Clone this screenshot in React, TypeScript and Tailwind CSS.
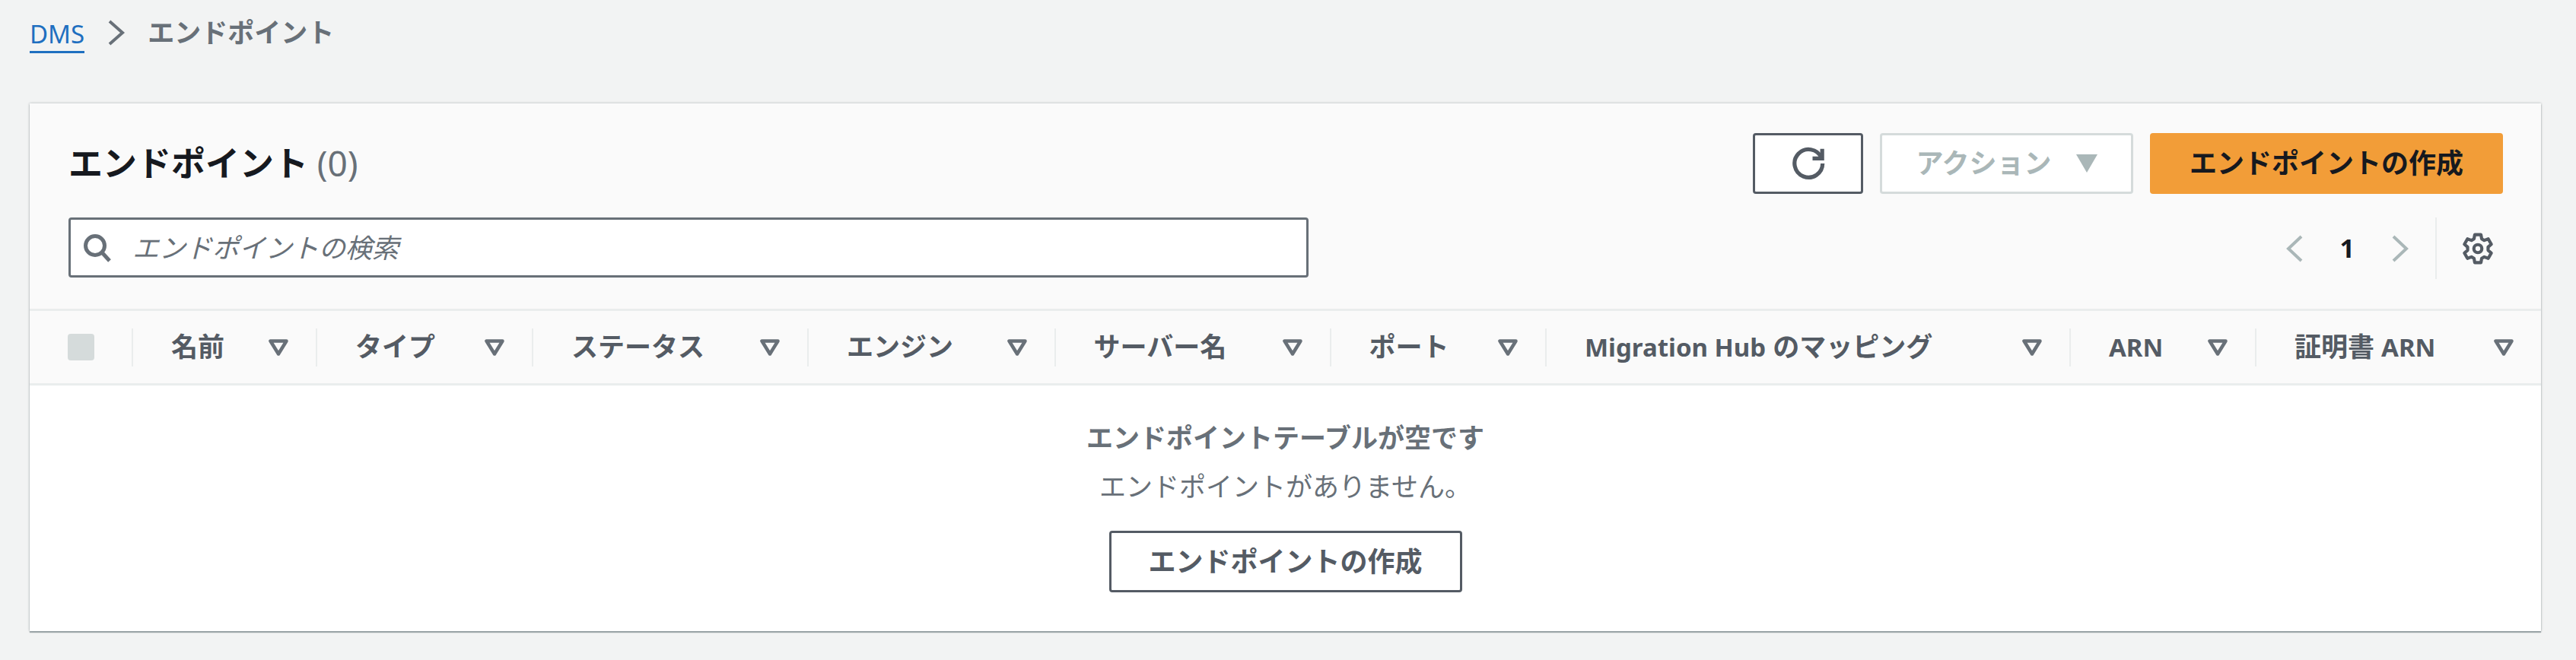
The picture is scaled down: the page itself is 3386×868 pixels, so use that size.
import React from "react";

function SortArrow() {
  return (
    <svg width="26" height="22" viewBox="0 0 26 22" className="shrink-0" fill="none">
      <path d="M2.5 2.5H23.5L13 19.5Z" stroke="#687078" strokeWidth="4.5" strokeLinejoin="round" />
    </svg>
  );
}

function Chevron({ dir, color, w, h, sw }: { dir: "l" | "r"; color: string; w: number; h: number; sw: number }) {
  const d = dir === "r" ? `M${sw} ${sw} L${w - sw} ${h / 2} L${sw} ${h - sw}` : `M${w - sw} ${sw} L${sw} ${h / 2} L${w - sw} ${h - sw}`;
  return (
    <svg width={w} height={h} viewBox={`0 0 ${w} ${h}`} fill="none" className="shrink-0">
      <path d={d} stroke={color} strokeWidth={sw} />
    </svg>
  );
}

function Latin({ children }: { children: React.ReactNode }) {
  return <span className="text-[33px]">{children}</span>;
}

const cols: { key: string; label: React.ReactNode; w: string }[] = [
  { key: "name", label: "名前", w: "w-[242px]" },
  { key: "type", label: "タイプ", w: "w-[284px]" },
  { key: "status", label: "ステータス", w: "w-[362px]" },
  { key: "engine", label: "エンジン", w: "w-[324.5px]" },
  { key: "server", label: "サーバー名", w: "w-[362px]" },
  { key: "port", label: "ポート", w: "w-[283.5px]" },
  { key: "hub", label: <><Latin>Migration Hub</Latin> のマッピング</>, w: "w-[689px]" },
  { key: "arn", label: <Latin>ARN</Latin>, w: "w-[244px]" },
  { key: "cert", label: <>証明書 <Latin>ARN</Latin></>, w: "w-[376px]" },
];

export default function App() {
  return (
    <div className="h-[868px] bg-[#f2f3f3] pl-[39px] pr-[46px] overflow-hidden font-['Noto_Sans','Noto_Sans_CJK_JP',sans-serif]">
      <nav className="flex items-center h-[136px] pb-[50px]">
        <span className="text-[33px] leading-[44px] text-[#1f6fc0] border-b-[3px] border-[#1f6fc0] mt-[6px]">DMS</span>
        <span className="ml-[29px] mr-[29px]">
          <Chevron dir="r" color="#687078" w={25} h={38} sw={4} />
        </span>
        <span className="text-[35px] leading-[44px] font-bold text-[#687078]">エンドポイント</span>
      </nav>

      <section className="bg-white h-[694px] shadow-[0_0_3px_rgba(0,28,36,0.3),0_2px_1px_rgba(0,28,36,0.3)] flex flex-col">
        <header className="bg-[#fafafa] h-[273px] pl-[51px] pr-[50px] pt-[39px] border-b-[3px] border-[#eaeded]">
          <div className="flex items-center justify-between h-[80px]">
            <h1 className="text-[45px] leading-[56px] font-bold text-[#16191f] -mt-[2px]">
              エンドポイント <span className="font-normal text-[#687078] text-[46px]">(0)</span>
            </h1>
            <div className="flex items-center gap-[22px]">
              <button className="w-[145px] h-[80px] bg-white border-[3px] border-[#545b64] rounded-[4px] flex items-center justify-center">
                <svg width="44" height="44" viewBox="0 0 16 16" fill="none" stroke="#545b64" strokeWidth="1.9">
                  <path d="M14.2 5.2A6.7 6.7 0 1 0 14.8 8" />
                  <path d="M14.6 1V5.6H10" />
                </svg>
              </button>
              <button className="w-[333px] h-[80px] bg-white border-[3px] border-[#d5dbdb] rounded-[4px] flex items-center justify-center gap-[32px] text-[36px] font-bold text-[#aab7b8]">
                アクション
                <svg width="28" height="24" viewBox="0 0 28 24"><path d="M0 0H28L14 24Z" fill="#aab7b8" /></svg>
              </button>
              <button className="w-[464px] h-[80px] bg-[#f29d38] rounded-[4px] flex items-center justify-center text-[36px] font-bold text-[#16191f]">
                エンドポイントの作成
              </button>
            </div>
          </div>
          <div className="flex items-start justify-between mt-[31px] h-[81px]">
            <div className="w-[1630px] h-[79px] bg-white border-[3px] border-[#687078] rounded-[4px] flex items-center pl-[16px]">
              <svg width="38" height="38" viewBox="0 0 38 38" fill="none" stroke="#687078" strokeWidth="5" className="shrink-0">
                <circle cx="16" cy="16" r="12.5" />
                <path d="M25 25L35 36" />
              </svg>
              <span className="ml-[27px] text-[35px] italic text-[#687078] mt-[2px]">エンドポイントの検索</span>
            </div>
            <div className="flex items-center h-[81px] pr-[12px]">
              <Chevron dir="l" color="#aab7b8" w={25} h={40} sw={4} />
              <span className="mx-[47px] text-[34px] font-bold text-[#16191f]">1</span>
              <Chevron dir="r" color="#aab7b8" w={25} h={40} sw={4} />
              <div className="ml-[34px] h-[81px] border-l-2 border-[#eaeded] pl-[33px] flex items-center">
                <svg width="42" height="42" viewBox="0 0 24 24" fill="none" stroke="#545b64" strokeWidth="2.4" strokeLinejoin="round">
                  <path d="M9.7 1.5h4.6l.6 3.2 1.9 1.1 3-1.1 2.3 4-2.4 2.1v2.4l2.4 2.1-2.3 4-3-1.1-1.9 1.1-.6 3.2H9.7l-.6-3.2-1.9-1.1-3 1.1-2.3-4 2.4-2.1v-2.4L1.9 8.7l2.3-4 3 1.1 1.9-1.1z" />
                  <circle cx="12" cy="12" r="3" />
                </svg>
              </div>
            </div>
          </div>
        </header>

        <div className="flex items-center h-[98px] bg-[#fafafa] border-b-[3px] border-[#eaeded] text-[#545b64]">
          <div className="w-[134px] shrink-0 pl-[50px]">
            <div className="w-[35px] h-[35px] bg-[#d5dbdb] rounded-[4px]" />
          </div>
          {cols.map((c) => (
            <div key={c.key} className={`${c.w} pr-[36px] shrink-0 h-[50px] border-l-2 border-[#eaeded] pl-[50px] flex items-center justify-between`}>
              <span className="text-[35px] font-bold whitespace-nowrap">{c.label}</span>
              <SortArrow />
            </div>
          ))}
        </div>

        <div className="flex-1 flex flex-col items-center pt-[49px] text-center">
          <div className="text-[35px] leading-[40px] font-bold text-[#687078]">エンドポイントテーブルが空です</div>
          <div className="text-[35px] leading-[40px] text-[#687078] mt-[24px]">エンドポイントがありません。</div>
          <button className="mt-[38px] w-[464px] h-[81px] bg-white border-[3px] border-[#545b64] rounded-[4px] text-[36px] font-bold text-[#545b64]">
            エンドポイントの作成
          </button>
        </div>
      </section>
    </div>
  );
}
